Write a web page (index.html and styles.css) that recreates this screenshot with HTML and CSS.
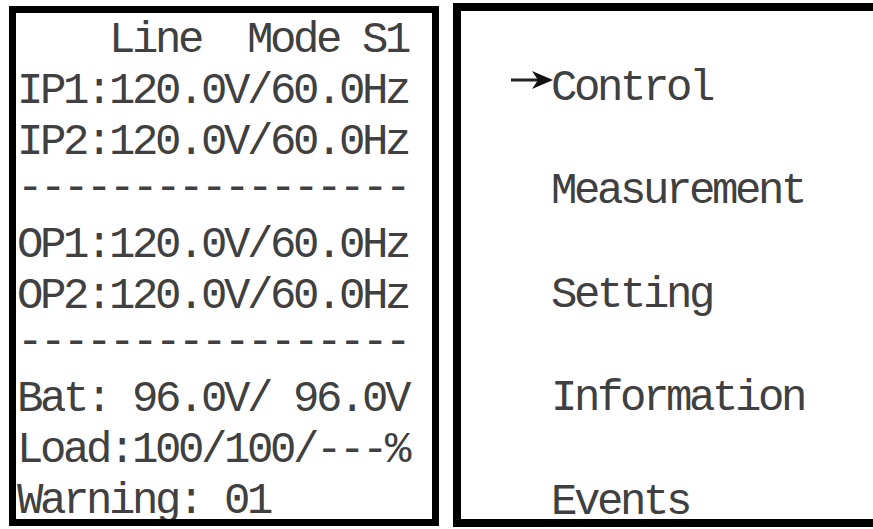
FILE: index.html
```html
<!DOCTYPE html>
<html lang="en">
<head>
  <meta charset="UTF-8">
  <title>UPS LCD Screens</title>
  <link rel="stylesheet" href="styles.css">
</head>
<body>

<div class="screens">
  <div class="lcd status">
    <div class="row">    Line  Mode S1</div>
    <div class="row">IP1:120.0V/60.0Hz</div>
    <div class="row">IP2:120.0V/60.0Hz</div>
    <div class="row dash">-----------------</div>
    <div class="row">OP1:120.0V/60.0Hz</div>
    <div class="row">OP2:120.0V/60.0Hz</div>
    <div class="row dash">-----------------</div>
    <div class="row">Bat: 96.0V/ 96.0V</div>
    <div class="row">Load:100/100/---%</div>
    <div class="row">Warning: 01</div>
  </div>

  <div class="lcd menu">
    <ul class="menu-list">
      <li class="menu-item active"><span class="marker"><svg width="42" height="22" viewBox="0 0 42 22">
            <rect x="0" y="9.5" width="32" height="3" fill="#222"/>
            <path d="M21 2 L42 11 L21 20 L27 11 Z" fill="#111"/>
          </svg></span>Control</li>
      <li class="menu-item"><span class="marker"></span>Measurement</li>
      <li class="menu-item"><span class="marker"></span>Setting</li>
      <li class="menu-item"><span class="marker"></span>Information</li>
      <li class="menu-item"><span class="marker"></span>Events</li>
    </ul>
  </div>
</div>

</body>
</html>
```

FILE: styles.css
```css
html, body {
  margin: 0;
  background: #fff;
  overflow: hidden;
}
.screens {
  display: flex;
  align-items: flex-start;
  width: 900px;
}
.lcd {
  box-sizing: border-box;
  background: #fff;
  border: 7px solid #000;
  font-family: 'Liberation Mono', monospace;
  font-size: 44px;
  letter-spacing: -3.4px;
  color: #404040;
  overflow: hidden;
}
.status {
  margin: 6px 0 0 9px;
  width: 430px;
  height: 520px;
  padding: 1.5px 0 0 1px;
}
.row {
  white-space: pre;
  line-height: 51.3px;
  height: 51.3px;
}
/* separator dashes sit a little higher than text baseline */
.row.dash {
  line-height: 41.3px;
}
.menu {
  margin: 3px 0 0 14px;
  width: 440px;
  height: 524px;
  border-width: 8px;
}
.menu-list {
  list-style: none;
  margin: 0;
  padding: 0 0 0 50px;
}
.menu-item {
  padding-top: 51.75px;
  height: 51.75px;
  line-height: 51.75px;
  white-space: pre;
}
.marker {
  display: inline-block;
  width: 40px;
  letter-spacing: 0;
}
.marker svg {
  vertical-align: 9px;
  margin-right: -2px;
}
```
